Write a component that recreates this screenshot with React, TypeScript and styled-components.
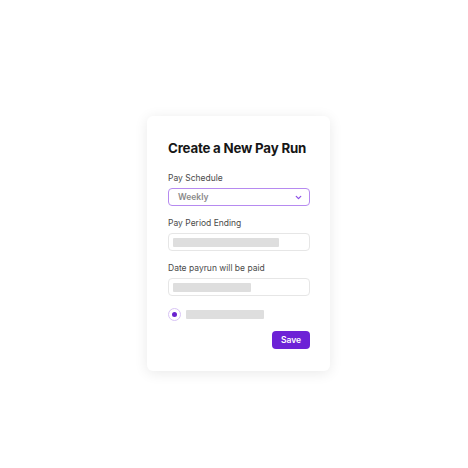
import * as React from 'react';
import styled, { createGlobalStyle } from 'styled-components';

const GlobalStyle = createGlobalStyle`
  html, body {
    margin: 0;
    padding: 0;
    background: #ffffff;
  }
  body {
    font-family: Inter, "Open Sans", sans-serif;
  }
`;

const Page = styled.div`
  width: 468px;
  height: 468px;
  display: flex;
  align-items: flex-start;
  justify-content: center;
  padding-top: 116px;
  box-sizing: border-box;
`;

const Card = styled.div`
  width: 183px;
  height: 255px;
  box-sizing: border-box;
  background: #ffffff;
  border-radius: 6px;
  box-shadow: 0 2px 14px rgba(0, 0, 0, 0.09);
  padding: 23px 20px 0 21px;
  display: flex;
  flex-direction: column;
  margin-left: 9px;
`;

const Title = styled.h1`
  margin: 0 0 16px;
  font-size: 13.3px;
  font-weight: 700;
  color: #161616;
  letter-spacing: -0.2px;
  line-height: 18px;
  white-space: nowrap;
`;

const Label = styled.div`
  font-size: 8.5px;
  color: #4a4a4a;
  line-height: 10px;
  margin-bottom: 5px;
`;

const Field = styled.div<{ $active?: boolean }>`
  height: 18px;
  box-sizing: border-box;
  border: 1px solid ${(p) => (p.$active ? '#b68af0' : '#e6e6e6')};
  border-radius: 4px;
  display: flex;
  align-items: center;
  padding: 0 6px 0 4px;
  margin-bottom: 12px;
`;

const SelectText = styled.span`
  flex: 1;
  font-size: 8.5px;
  font-weight: 600;
  color: #8a8a8a;
  padding-left: 5px;
`;

const Placeholder = styled.div<{ $w: number }>`
  width: ${(p) => p.$w}px;
  height: 9px;
  background: #dedede;
  border-radius: 1px;
`;

const RadioRow = styled.div`
  display: flex;
  align-items: center;
  gap: 5px;
  margin-bottom: 10px;
`;

const Radio = styled.div`
  width: 13px;
  height: 13px;
  box-sizing: border-box;
  border: 1px solid #d8c4f5;
  border-radius: 50%;
  display: flex;
  align-items: center;
  justify-content: center;
  &::after {
    content: '';
    width: 5px;
    height: 5px;
    border-radius: 50%;
    background: #6a22cf;
  }
`;

const Actions = styled.div`
  display: flex;
  justify-content: flex-end;
`;

const SaveButton = styled.button`
  width: 38px;
  height: 18px;
  border: none;
  border-radius: 4px;
  background: #6d22d6;
  color: #ffffff;
  font-family: inherit;
  font-size: 8.5px;
  font-weight: 600;
  padding: 0;
`;

const Chevron = () => (
  <svg width="9" height="9" viewBox="0 0 10 10" fill="none">
    <path d="M2.5 3.8 L5 6.2 L7.5 3.8" stroke="#8c4ee6" strokeWidth="1.4" strokeLinecap="round" strokeLinejoin="round" />
  </svg>
);

export default function App() {
  return (
    <>
      <GlobalStyle />
      <Page>
        <Card>
          <Title>Create a New Pay Run</Title>
          <Label>Pay Schedule</Label>
          <Field $active>
            <SelectText>Weekly</SelectText>
            <Chevron />
          </Field>
          <Label>Pay Period Ending</Label>
          <Field>
            <Placeholder $w={106} />
          </Field>
          <Label>Date payrun will be paid</Label>
          <Field>
            <Placeholder $w={78} />
          </Field>
          <RadioRow>
            <Radio />
            <Placeholder $w={78} />
          </RadioRow>
          <Actions>
            <SaveButton>Save</SaveButton>
          </Actions>
        </Card>
      </Page>
    </>
  );
}
